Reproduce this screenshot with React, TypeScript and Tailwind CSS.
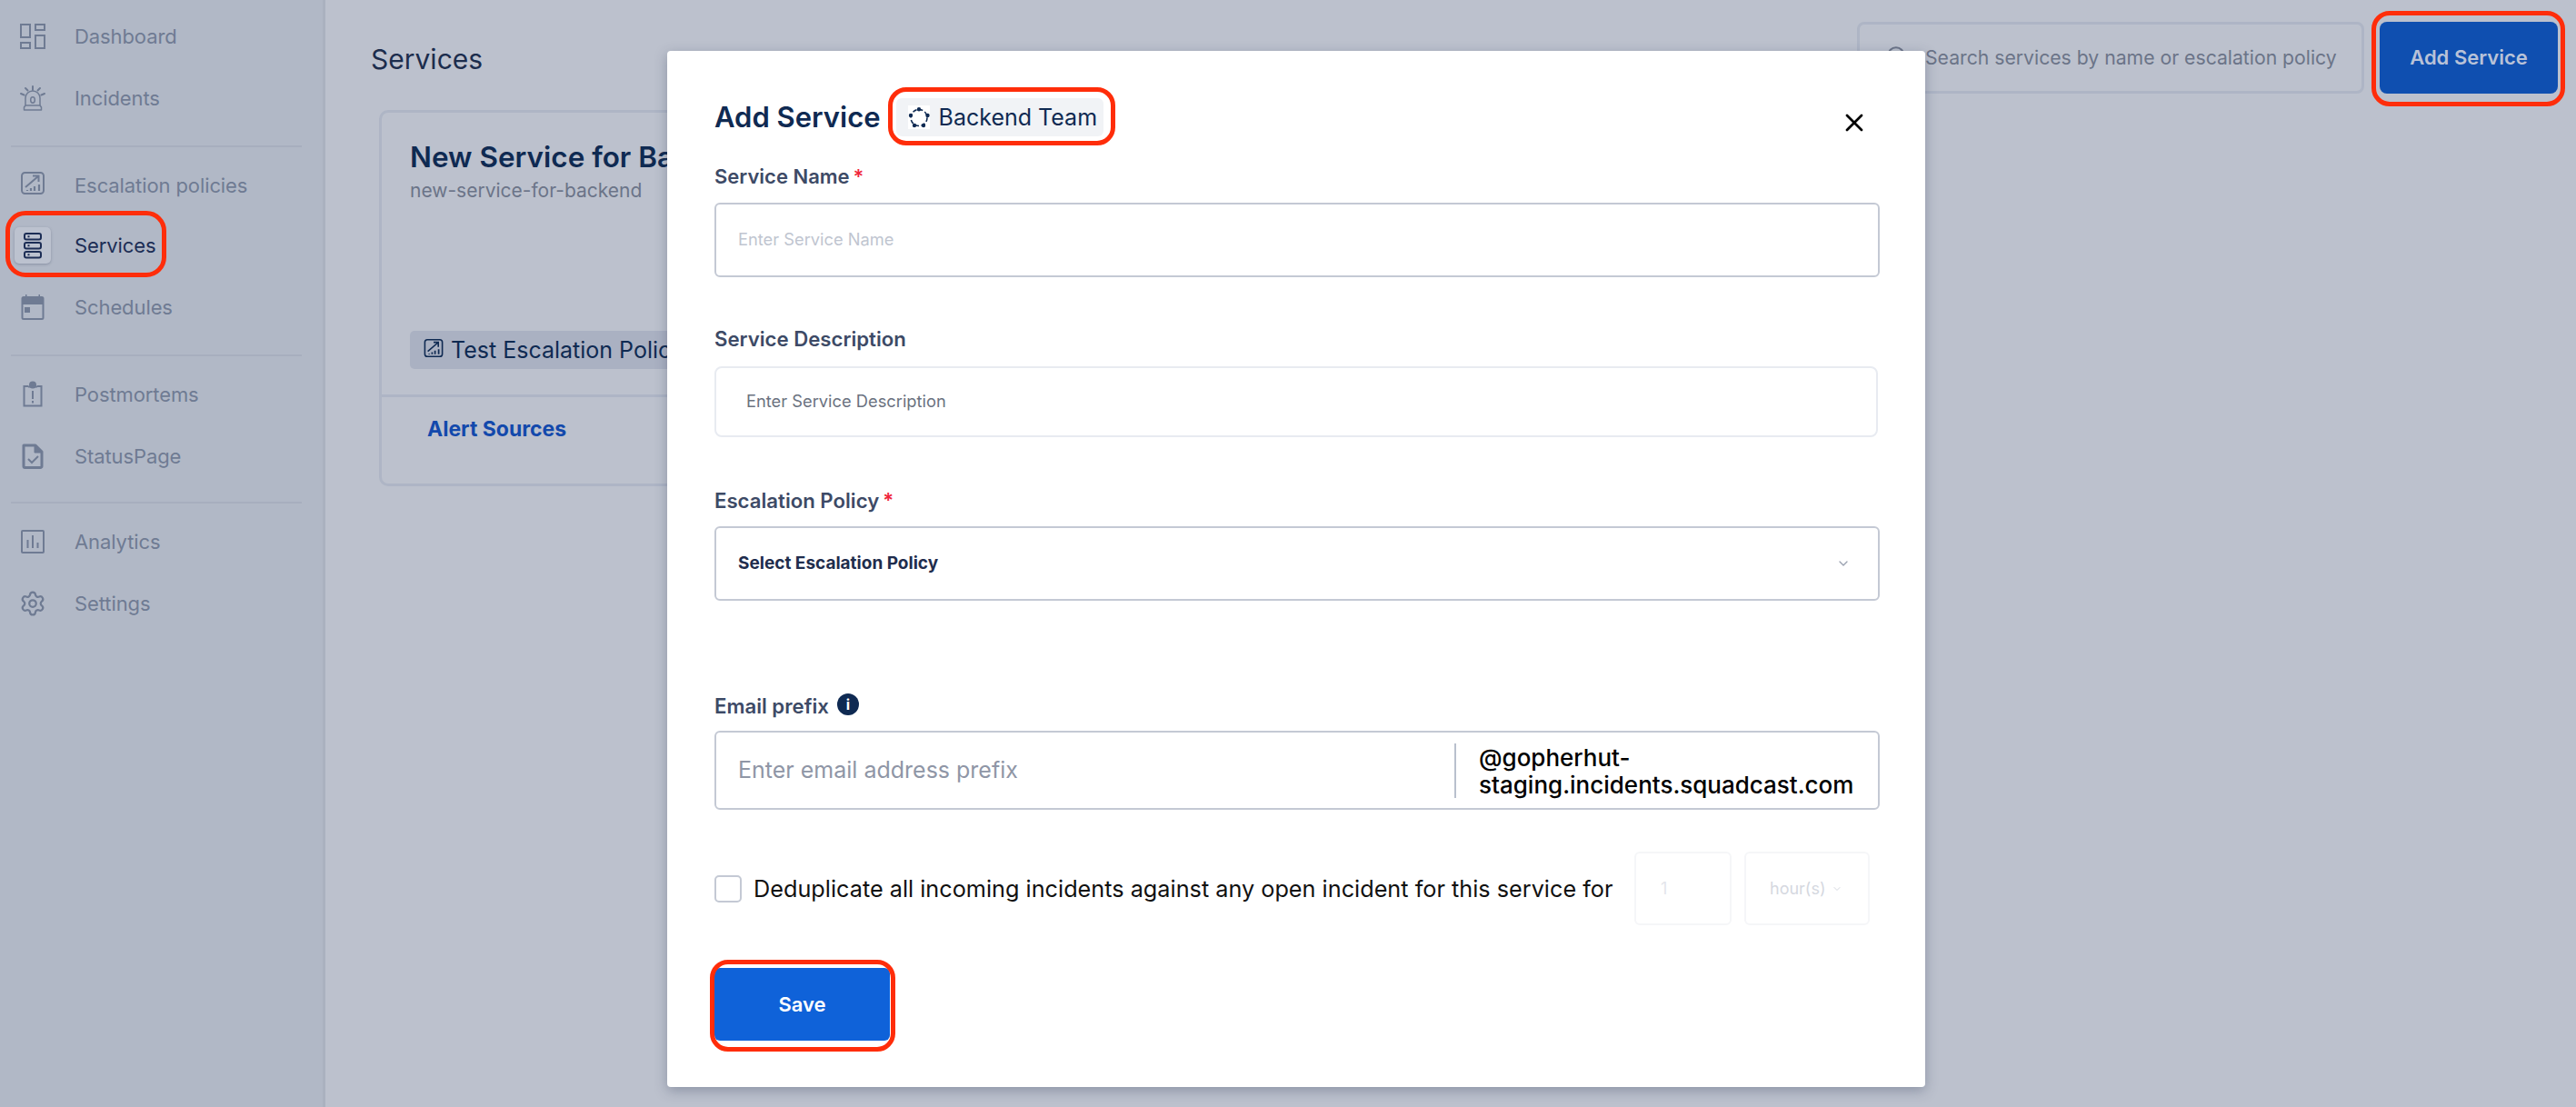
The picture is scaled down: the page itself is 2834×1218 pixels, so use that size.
import { Settings, X, ChevronDown, Search } from "lucide-react";

const font = { fontFamily: "Inter, 'Noto Sans', sans-serif" };

function DashboardIcon() {
  return (
    <svg width="28" height="28" viewBox="0 0 28 28" fill="none" stroke="currentColor" strokeWidth="2">
      <rect x="1" y="1" width="10" height="14" />
      <rect x="17" y="1" width="10" height="6" />
      <rect x="17" y="13" width="10" height="14" />
      <rect x="1" y="21" width="10" height="6" />
    </svg>
  );
}

function IncidentsIcon() {
  return (
    <svg width="28" height="28" viewBox="0 0 28 28" fill="none" stroke="currentColor" strokeWidth="1.5">
      <path d="M6 22v-8a8 8 0 0 1 16 0v8" />
      <path d="M6 22h16l1.500 2v3h-19v-3z" strokeLinejoin="round" />
      <ellipse cx="14" cy="16" rx="2.300" ry="3.200" />
      <path d="M14 1v4M6 3l2.500 2.500M22 3l-2.500 2.500" strokeWidth="2" strokeLinecap="round" />
      <path d="M1 9l3.500 1.500M27 9l-3.500 1.500" strokeWidth="2" strokeLinecap="round" />
    </svg>
  );
}

function EscalationIcon({ size = 30 }: { size?: number }) {
  return (
    <svg width={size} height={size} viewBox="0 0 30 30" fill="none" stroke="currentColor" strokeWidth="2">
      <rect x="3" y="1" width="24" height="23" rx="3.500" />
      <path d="M7 17 21 5M15 4.500h6.500V11" />
      <path d="M9 21v-1M13 21v-3M17 21v-5M22 21v-7" strokeWidth="2.200" />
    </svg>
  );
}

function ServicesIcon() {
  return (
    <svg width="22" height="30" viewBox="0 0 22 30" fill="none" stroke="currentColor" strokeWidth="2">
      <rect x="2" y="2" width="18" height="6.500" rx="2" />
      <rect x="2" y="12" width="18" height="6.500" rx="2" />
      <rect x="2" y="22" width="18" height="6.500" rx="2" />
      <path d="M5.500 5.200h2M5.500 15.200h2M5.500 25.200h2" />
    </svg>
  );
}

function SchedulesIcon() {
  return (
    <svg width="26" height="28" viewBox="0 0 26 28" fill="currentColor">
      <path d="M5 0h1.500v4H5zM19.500 0H21v4h-1.500z" />
      <path d="M3 2h20a2.500 2.500 0 0 1 2.500 2.500v21A2.500 2.500 0 0 1 23 28H3a2.500 2.500 0 0 1-2.500-2.500v-21A2.500 2.500 0 0 1 3 2zm-.5 9v14.500a.5.500 0 0 0 .5.500h20a.5.500 0 0 0 .5-.500V11z" fillRule="evenodd" />
      <rect x="4" y="14" width="6" height="6" />
    </svg>
  );
}

function PostmortemsIcon() {
  return (
    <svg width="30" height="30" viewBox="0 0 30 30" fill="none" stroke="currentColor" strokeWidth="2">
      <path d="M10 6H5.500v21.500h19V6H20" />
      <circle cx="15" cy="4.500" r="3" fill="currentColor" />
      <path d="M10 6.500h10M15 11v9M15 22v2.500" />
    </svg>
  );
}

function StatusPageIcon() {
  return (
    <svg width="30" height="30" viewBox="0 0 30 30" fill="none" stroke="currentColor" strokeWidth="3">
      <path d="M5 3h13l7 7v16a1.500 1.500 0 0 1-1.500 1.500h-17A1.500 1.500 0 0 1 5 26z" strokeLinejoin="round" />
      <path d="M17 3v8h8" fill="currentColor" strokeWidth="1" />
      <path d="m10 18 4 4 7-7" strokeWidth="2" />
    </svg>
  );
}

function AnalyticsIcon() {
  return (
    <svg width="30" height="30" viewBox="0 0 30 30" fill="none" stroke="currentColor" strokeWidth="2">
      <rect x="3" y="3" width="24" height="24" rx="1" />
      <path d="M9.500 22v-9M15 22V8M20.500 22v-6" />
    </svg>
  );
}

function TeamIcon() {
  return (
    <svg width="24" height="26" viewBox="0 0 24 26" fill="none" stroke="#0f2a52" strokeWidth="1.600">
      <rect width="24" height="26" fill="#fff" stroke="none" />
      <circle cx="12" cy="13.500" r="9" strokeDasharray="4.500 2.500" />
      <g fill="#0f2a52" stroke="none">
        <circle cx="12" cy="4.300" r="2.200" />
        <circle cx="21.500" cy="11" r="2.200" />
        <circle cx="17" cy="22" r="2.200" />
        <circle cx="7" cy="22" r="2.200" />
        <circle cx="3" cy="11" r="2.200" />
      </g>
    </svg>
  );
}

function NavItem({ icon, label, top }: { icon: React.ReactNode; label: string; top: string }) {
  return (
    <div className={`flex items-center text-[#6f7b93] ${top}`}>
      <div className="w-[72px] h-[40px] flex items-center justify-center">{icon}</div>
      <span className="ml-[10px] text-[22px] leading-[30px] tracking-[-0.1px]">{label}</span>
    </div>
  );
}

function Divider({ top }: { top: string }) {
  return <div className={`ml-[12px] w-[320px] h-[2px] bg-[#a7aebe] ${top}`} />;
}

function Required() {
  return <span className="text-[#f0263c] ml-[4px]">*</span>;
}

export default function App() {
  return (
    <div className="relative w-[2834px] h-[1218px] overflow-hidden flex bg-[#bcc1cd]" style={font}>
      {/* Sidebar */}
      <aside className="w-[358px] h-full shrink-0 bg-[#b1b8c6] border-r-[3px] border-[#aab1bf] pt-[20px]">
        <NavItem icon={<DashboardIcon />} label="Dashboard" top="" />
        <NavItem icon={<IncidentsIcon />} label="Incidents" top="mt-[28px]" />
        <Divider top="mt-[32px]" />
        <NavItem icon={<EscalationIcon />} label="Escalation policies" top="mt-[22px]" />
        <div className="flex items-center mt-[26px] text-[#1c2d55]">
          <div className="ml-[16px] w-[40px] h-[40px] rounded-[5px] bg-[#bcc2cf] shadow-[0_1px_3px_rgba(60,70,100,0.35)] flex items-center justify-center">
            <ServicesIcon />
          </div>
          <span className="ml-[26px] text-[22px] leading-[30px] tracking-[-0.1px]">Services</span>
        </div>
        <NavItem icon={<SchedulesIcon />} label="Schedules" top="mt-[28px]" />
        <Divider top="mt-[32px]" />
        <NavItem icon={<PostmortemsIcon />} label="Postmortems" top="mt-[22px]" />
        <NavItem icon={<StatusPageIcon />} label="StatusPage" top="mt-[28px]" />
        <Divider top="mt-[30px]" />
        <NavItem icon={<AnalyticsIcon />} label="Analytics" top="mt-[22px]" />
        <NavItem icon={<Settings size={30} strokeWidth={1.8} />} label="Settings" top="mt-[28px]" />
      </aside>

      {/* Page behind the modal */}
      <main className="flex-1 min-w-0">
        <div className="flex items-start h-[121px]">
          <h1 className="ml-[50px] mt-[45px] text-[30px] leading-[40px] text-[#1c2d4d]">Services</h1>
          <div className="ml-auto mt-[24px] mr-[20px] flex gap-[17px]">
            <div className="w-[558px] h-[79px] rounded-[8px] border-[3px] border-[#aeb5c5] flex items-start pl-[28px] pt-[20px] text-[#6b7488]">
              <Search size={26} className="mt-[2px] shrink-0" />
              <span className="ml-[18px] text-[21.200px] leading-[32px] whitespace-nowrap">Search services by name or escalation policy</span>
            </div>
            <button className="w-[196px] h-[79px] rounded-[8px] bg-[#0f4fb0] text-[#b8c2d8] text-[22px] font-semibold">Add Service</button>
          </div>
        </div>
        <div className="ml-[59px] w-[1000px] h-[414px] rounded-[10px] border-[3px] border-[#aeb5c5] flex flex-col">
          <div className="h-[313px] border-b-[3px] border-[#aeb5c5] pl-[31px] pt-[29px]">
            <h2 className="text-[31.500px] leading-[40px] font-semibold text-[#0f2a52]">New Service for Backend</h2>
            <p className="mt-[3px] text-[21px] leading-[28px] text-[#6b7488]">new-service-for-backend</p>
            <div className="mt-[140px] w-fit h-[42px] rounded-[5px] bg-[#aab1c2] flex items-center pl-[14px] pr-[12px] text-[#0f2a52]">
              <EscalationIcon size={24} />
              <span className="ml-[7px] text-[25px] leading-[32px]">Test Escalation Policy</span>
            </div>
          </div>
          <div className="pl-[50px] pt-[20px]">
            <span className="text-[23px] leading-[30px] font-bold text-[#1349ac]">Alert Sources</span>
          </div>
        </div>
      </main>

      {/* Modal */}
      <div className="absolute left-[734px] top-[56px] w-[1384px] h-[1140px] bg-white rounded-[4px] shadow-[0_4px_14px_rgba(50,60,90,0.35)] pl-[52px] pr-[50px] pt-[52px]">
        <div className="flex items-center h-[42px]">
          <h2 className="text-[31px] leading-[40px] font-semibold text-[#0f2a52]">Add Service</h2>
          <div className="ml-[17px] w-[228px] h-[42px] rounded-[6px] bg-[#f1f3f6] flex items-center pl-[13px]">
            <TeamIcon />
            <span className="ml-[10px] text-[25px] leading-[32px] text-[#0f2a52]">Backend Team</span>
          </div>
          <X size={32} strokeWidth={2} className="ml-auto mr-[12px] mt-[12px] text-black" />
        </div>

        <label className="block mt-[30px] text-[22px] leading-[28px] font-semibold text-[#3d4a66]">
          Service Name
          <Required />
        </label>
        <div className="mt-[15px] h-[82px] rounded-[6px] border-2 border-[#c4c9d4] flex items-center pl-[24px] text-[18.300px] text-[#c0c5d0]">
          Enter Service Name
        </div>

        <label className="block mt-[54px] text-[22.200px] leading-[28px] font-semibold text-[#3d4a66]">Service Description</label>
        <div className="mt-[16px] h-[78px] mr-[2px] rounded-[8px] border-2 border-[#e8ebf1] flex items-center pl-[33px] text-[18.300px] text-[#6b7280]">
          Enter Service Description
        </div>

        <label className="block mt-[56px] text-[22.200px] leading-[28px] font-semibold text-[#3d4a66]">
          Escalation Policy
          <Required />
        </label>
        <div className="mt-[14px] h-[82px] rounded-[6px] border-2 border-[#c4c9d4] flex items-center pl-[24px] pr-[30px] text-[19px] font-bold text-[#1f2d4d]">
          Select Escalation Policy
          <ChevronDown size={16} className="ml-auto text-[#9aa1b0]" />
        </div>

        <div className="flex items-center mt-[102px] h-[28px]">
          <span className="text-[22.200px] leading-[28px] font-semibold text-[#3d4a66]">Email prefix</span>
          <span className="ml-[9px] mt-[-4px] w-[24px] h-[24px] rounded-full bg-[#0f2a52] text-white text-[16px] leading-[24px] font-bold text-center">i</span>
        </div>
        <div className="mt-[13px] h-[87px] rounded-[6px] border-2 border-[#c4c9d4] flex items-center pl-[24px] text-[25px] text-[#8f96a6]">
          <span className="w-[788px]">Enter email address prefix</span>
          <div className="h-[60px] w-[2px] bg-[#b9c0cd]" />
          <div className="ml-[25px] mt-[2px] text-[26px] leading-[30px] font-medium text-black">
            @gopherhut-
            <br />
            staging.incidents.squadcast.com
          </div>
        </div>

        <div className="flex items-center mt-[46px] h-[81px]">
          <div className="w-[30px] h-[30px] rounded-[5px] border-2 border-[#c4c9d4]" />
          <span className="ml-[13px] w-[969px] text-[25.250px] leading-[32px] text-[#111] whitespace-nowrap">
            Deduplicate all incoming incidents against any open incident for this service for
          </span>
          <div className="w-[107px] h-[81px] rounded-[6px] border-2 border-[#f5f6f8] flex items-center pl-[27px] text-[18px] text-[#e4e6eb]">1</div>
          <div className="ml-[14px] w-[138px] h-[81px] rounded-[6px] border-2 border-[#f5f6f8] flex items-center pl-[26px] text-[18px] text-[#d5d8df]">
            hour(s)
            <ChevronDown size={12} className="ml-[6px]" />
          </div>
        </div>

        <button className="block mt-[47px] w-[193px] h-[80px] rounded-[6px] bg-[#0f62d9] text-white text-[22px] font-semibold">Save</button>
      </div>

      {/* Red annotation outlines */}
      <div className="absolute left-[6px] top-[232px] w-[177px] h-[73px] rounded-[22px] border-[5px] border-[#ff2d0a]" />
      <div className="absolute left-[977px] top-[96px] w-[250px] h-[64px] rounded-[20px] border-[5px] border-[#ff2d0a]" />
      <div className="absolute left-[2609px] top-[12px] w-[213px] h-[105px] rounded-[20px] border-[5px] border-[#ff2d0a]" />
      <div className="absolute left-[781px] top-[1056px] w-[204px] h-[101px] rounded-[20px] border-[5px] border-[#ff2d0a]" />
    </div>
  );
}
